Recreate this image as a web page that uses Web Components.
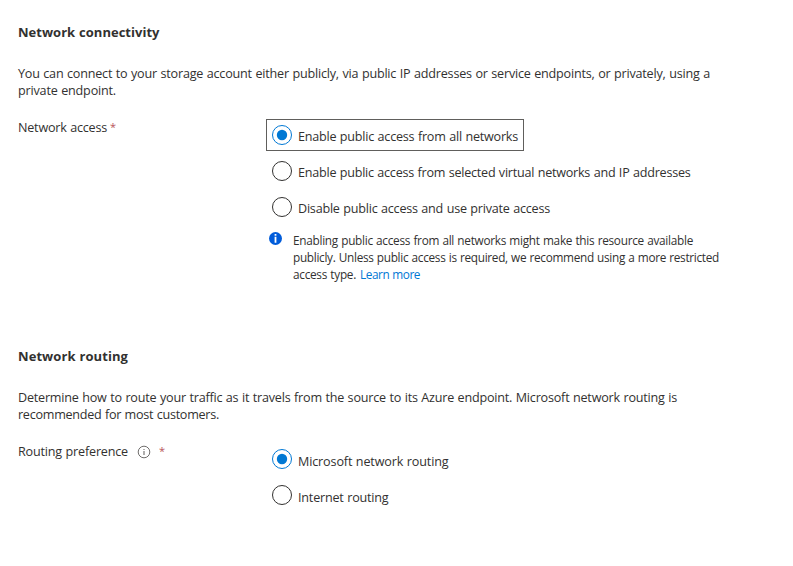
<!DOCTYPE html>
<html lang="en">
<head>
<meta charset="utf-8">
<title>Networking</title>
<style>
body{margin:0;background:#fff;color:#323130;font:12.6px/17px "Open Sans","Noto Sans",sans-serif;width:793px;height:566px;overflow:hidden}
</style>
</head>
<body>
<network-form></network-form>
<script>
const attach = (el, html) => { el.attachShadow({mode:'open'}).innerHTML = html; };

/* One line of text, spaced to span a given width. */
customElements.define('fit-line', class extends HTMLElement {
  connectedCallback() {
    if (this.shadowRoot) return;
    attach(this, `<style>:host{display:block;height:17px;white-space:nowrap;word-spacing:.5px}span{display:inline-block}</style><span><slot></slot></span>`);
    const span = this.shadowRoot.querySelector('span');
    const fit = () => {
      span.style.letterSpacing = '0px';
      const n = this.textContent.length;
      span.style.letterSpacing = ((+this.getAttribute('width') - span.getBoundingClientRect().width) / n) + 'px';
    };
    requestAnimationFrame(fit);
  }
});

customElements.define('form-section', class extends HTMLElement {
  constructor() {
    super();
    attach(this, `<style>
      :host{display:block}
      h2{margin:0;font-size:13px;font-weight:700;line-height:17px}
      .text{margin:24px 0 20px}
    </style><h2><slot name="title"></slot></h2><div class="text"><slot name="text"></slot></div><slot></slot>`);
  }
});

customElements.define('form-row', class extends HTMLElement {
  constructor() {
    super();
    attach(this, `<style>
      :host{display:grid;grid-template-columns:248px 1fr;align-items:start}
      .label{display:flex}
    </style><div class="label"><slot name="label"></slot></div><div><slot></slot></div>`);
  }
});

customElements.define('required-mark', class extends HTMLElement {
  constructor() {
    super();
    attach(this, `<style>:host{display:block;color:#b8545a;font-size:11px;line-height:16px;margin-left:-1px}</style>*`);
  }
});

customElements.define('radio-option', class extends HTMLElement {
  constructor() {
    super();
    attach(this, `<style>
      :host{display:flex;box-sizing:border-box;width:fit-content;height:32px;margin-bottom:4px;padding:5px 5px 0;border:1px solid transparent;gap:6px}
      :host([focused]){border-color:#605e5c}
      svg{display:block;flex:none}
      .ring{fill:none;stroke:#323130}
      .dot{fill:none}
      :host([checked]) .ring{stroke:#0078d4}
      :host([checked]) .dot{fill:#0078d4}
      div{padding-top:var(--label-drop,3px)}
    </style><svg width="20" height="20"><circle class="ring" cx="10" cy="10" r="9.5"/><circle class="dot" cx="10" cy="10" r="5.2"/></svg><div><slot></slot></div>`);
  }
});

customElements.define('info-message', class extends HTMLElement {
  constructor() {
    super();
    attach(this, `<style>
      :host{display:flex;gap:11px;padding-left:3px;margin-top:9px;font-size:11.8px}
      svg{display:block;flex:none}
    </style><svg width="13" height="13" viewBox="0 0 13 13"><circle cx="6.5" cy="6.5" r="6.5" fill="#015cda"/><path d="M5.6 2h1.8v1.8H5.6zM5.6 4.8h1.8v6H5.6z" fill="#fff"/></svg><div><slot></slot></div>`);
  }
});

customElements.define('help-icon', class extends HTMLElement {
  constructor() {
    super();
    attach(this, `<style>:host{display:block;margin:2px 9px 0 9px}svg{display:block}</style>
    <svg width="14" height="14" viewBox="0 0 14 14"><circle cx="7" cy="7" r="5.8" fill="none" stroke="#605e5c" stroke-width=".9"/><path d="M6.5 4h1v1h-1zM6.5 6h1v4h-1z" fill="#605e5c"/></svg>`);
  }
});

customElements.define('network-form', class extends HTMLElement {
  constructor() {
    super();
    attach(this, `<style>
      :host{display:block;padding:24px 18px 0}
      .routing{margin-top:65px;--label-drop:4px}
      .gap{width:4px}
      .last{display:flex;gap:4px}
      a{color:#0078d4;text-decoration:none}
    </style>
    <form-section>
      <fit-line slot="title" width="141.5">Network connectivity</fit-line>
      <fit-line slot="text" width="692">You can connect to your storage account either publicly, via public IP addresses or service endpoints, or privately, using a</fit-line>
      <fit-line slot="text" width="98">private endpoint.</fit-line>
      <form-row>
        <fit-line slot="label" width="89">Network access</fit-line><div slot="label" class="gap"></div><required-mark slot="label"></required-mark>
        <radio-option checked focused><fit-line width="220">Enable public access from all networks</fit-line></radio-option>
        <radio-option><fit-line width="392.5">Enable public access from selected virtual networks and IP addresses</fit-line></radio-option>
        <radio-option><fit-line width="252">Disable public access and use private access</fit-line></radio-option>
        <info-message><div>
          <fit-line width="400">Enabling public access from all networks might make this resource available</fit-line>
          <fit-line width="426">publicly. Unless public access is required, we recommend using a more restricted</fit-line>
          <div class="last"><fit-line width="63">access type.</fit-line><a><fit-line width="60">Learn more</fit-line></a></div>
        </div></info-message>
      </form-row>
    </form-section>
    <form-section class="routing">
      <fit-line slot="title" width="110">Network routing</fit-line>
      <fit-line slot="text" width="659">Determine how to route your traffic as it travels from the source to its Azure endpoint. Microsoft network routing is</fit-line>
      <fit-line slot="text" width="201">recommended for most customers.</fit-line>
      <form-row>
        <fit-line slot="label" width="110">Routing preference</fit-line><help-icon slot="label"></help-icon><required-mark slot="label"></required-mark>
        <radio-option checked><fit-line width="150.5">Microsoft network routing</fit-line></radio-option>
        <radio-option><fit-line width="90.5">Internet routing</fit-line></radio-option>
      </form-row>
    </form-section>`);
  }
});
</script>
</body>
</html>
